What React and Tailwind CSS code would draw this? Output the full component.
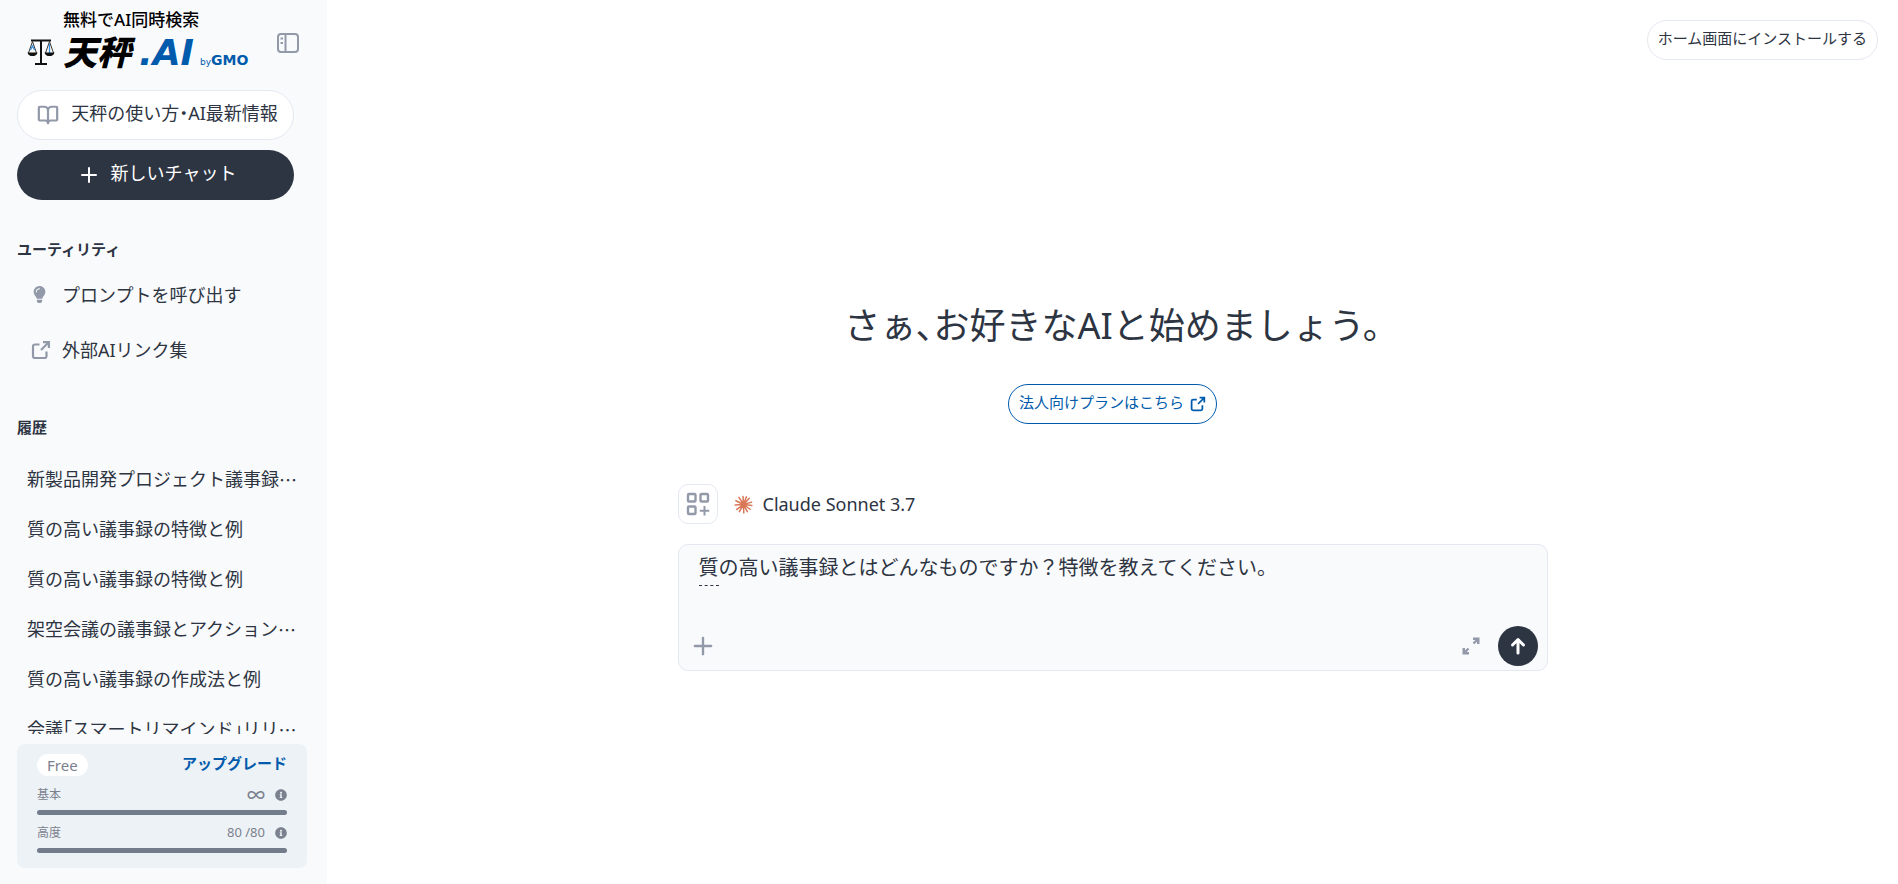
import { useState } from 'react';
import { BookOpen, Plus } from 'lucide-react';
import { FaLightbulb, FaInfoCircle } from 'react-icons/fa';

const history = [
  { title: '新製品開発プロジェクト議事録', cut: true },
  { title: '質の高い議事録の特徴と例' },
  { title: '質の高い議事録の特徴と例' },
  { title: '架空会議の議事録とアクション', cut: true },
  { title: '質の高い議事録の作成法と例' },
  { title: '会議「スマートリマインド」リリ', cut: true },
];

function ScalesIcon({ className }) {
  return (
    <svg viewBox="0 0 28 28" className={className} fill="none" aria-hidden="true">
      <path d="M4 2.500h20M14 2v23" stroke="#111" strokeWidth="2" />
      <path d="M8 26h12" stroke="#111" strokeWidth="2" />
      <path d="M5.500 3.500 1.500 15M5.500 3.500 9.500 15M22.500 3.500 18.500 15M22.500 3.500 26.500 15" stroke="#333" strokeWidth="1" />
      <path d="M3.500 12 5.500 8l2 4M22.500 6v9" stroke="#3b8fdc" strokeWidth="1.300" />
      <path d="M.5 14.500h10c-.6 2.600-2.600 3.600-5 3.600s-4.400-1-5-3.600ZM17.500 14.500h10c-.6 2.600-2.600 3.600-5 3.600s-4.400-1-5-3.600Z" fill="#111" />
    </svg>
  );
}

function SidebarIcon({ className }) {
  return (
    <svg viewBox="0 0 22 20" className={className} fill="none" stroke="currentColor" strokeWidth="2" aria-hidden="true">
      <rect x="1" y="1" width="20" height="18" rx="3" />
      <path d="M8.500 1v18" />
      <path d="M3.500 5.500h2.500M3.500 10h2.500" />
    </svg>
  );
}

function ExternalIcon({ className }) {
  return (
    <svg viewBox="0 0 20 20" className={className} fill="none" stroke="currentColor" strokeWidth="2.200" aria-hidden="true">
      <path d="M8.500 4.500H4A2 2 0 0 0 2 6.500V16a2 2 0 0 0 2 2h9.500a2 2 0 0 0 2-2v-4.500" />
      <path d="M18 2l-8 8" />
      <path d="M12 1h7v7h-2.200V3.200H12Z" fill="currentColor" stroke="none" />
      <path d="M14.500 2.500h3v3Z" fill="currentColor" stroke="none" />
    </svg>
  );
}

function ModelsIcon({ className }) {
  return (
    <svg viewBox="0 0 24 24" className={className} fill="none" stroke="currentColor" strokeWidth="2.400" aria-hidden="true">
      <rect x="2" y="2" width="7.500" height="7.500" rx="1" />
      <rect x="14.500" y="2" width="7.500" height="7.500" rx="1" />
      <rect x="2" y="14.500" width="7.500" height="7.500" rx="1" />
      <path d="M18.500 14v9.500M13.800 18.700h9.500" strokeWidth="2" />
    </svg>
  );
}

function BurstIcon({ className }) {
  return (
    <svg viewBox="0 0 20 20" className={className} stroke="#d97757" strokeWidth="1.600" strokeLinecap="round" aria-hidden="true">
      <path d="M10 10 9.500 1.500M10 10l3-8M10 10l6-6.500M10 10l8.500-2.500M10 10l8.800 1M10 10l7 5M10 10l4 7.500M10 10l.3 8.800M10 10l-4.300 7.500M10 10l-7 5.200M10 10l-8.800.5M10 10 2 6M10 10 5.200 2.500" />
    </svg>
  );
}

function ExpandIcon({ className }) {
  return (
    <svg viewBox="0 0 18 18" className={className} fill="currentColor" stroke="currentColor" aria-hidden="true">
      <path d="M11 .5h6.500V7H15V3h-4Z" stroke="none" />
      <path d="M7 17.500H.5V11H3v4h4Z" stroke="none" />
      <path d="M16 2l-4.500 4.500M2 16l4.500-4.500" strokeWidth="2.400" />
    </svg>
  );
}

function SendIcon({ className }) {
  return (
    <svg viewBox="0 0 16 18" className={className} fill="none" stroke="currentColor" strokeWidth="3" strokeLinecap="round" strokeLinejoin="round" aria-hidden="true">
      <path d="M8 16V2.500M2.500 8 8 2.500 13.500 8" />
    </svg>
  );
}

function Meter({ label, value }) {
  return (
    <div>
      <div className="flex h-6 items-center justify-between text-xs">
        <span>{label}</span>
        <span className="flex items-center gap-2.5 text-[13px]">
          {value}
          <FaInfoCircle className="size-3" />
        </span>
      </div>
      <div className="mt-[3px] h-[5px] rounded-full bg-[#737c8b]" />
    </div>
  );
}

export default function App() {
  const [prompt, setPrompt] = useState('質の高い議事録とはどんなものですか？特徴を教えてください。');

  return (
    <div className="flex h-screen bg-white font-['Noto_Sans','Noto_Sans_CJK_JP',sans-serif] text-[#2d3442] [font-feature-settings:'halt']" lang="ja">
      <aside className="flex w-[327px] shrink-0 flex-col bg-[#f9fafc] pb-4 pl-[17px] pr-5">
        <div className="flex items-center justify-between pr-2 pt-3">
          <a href="#" className="flex items-end gap-2 pl-2.5 text-black">
            <ScalesIcon className="mb-2 size-7" />
            <span className="flex flex-col">
              <span className="h-[18px] text-[17px] leading-4 font-medium">無料でAI同時検索</span>
              <span className="flex h-11 items-baseline font-black">
                <span className="text-[34px] leading-11 italic">天秤</span>
                <span className="flex items-baseline pl-2 font-['DejaVu_Sans',sans-serif] font-bold text-[#005bac]">
                  <span className="text-4xl leading-11 italic">.AI</span>
                  <span className="pl-1.5 text-[9px] leading-4 font-normal">by</span>
                  <span className="text-sm leading-4">GMO</span>
                </span>
              </span>
            </span>
          </a>
          <button type="button" aria-label="サイドバーを閉じる" className="text-[#9299a8]">
            <SidebarIcon className="h-5 w-[22px]" />
          </button>
        </div>

        <div className="mr-[13px] mt-4 flex flex-col gap-2.5 text-lg">
          <a href="#" className="flex h-[50px] items-center justify-center gap-3 rounded-full border border-[#e4e8f0] bg-white pl-1">
            <BookOpen className="size-[22px] text-[#9299a8]" strokeWidth={2.4} />
            <span className="pb-1">天秤の使い方・AI最新情報</span>
          </a>
          <button type="button" className="flex h-[50px] items-center justify-center gap-2.5 rounded-full bg-[#2d3442] pl-0.5 text-white">
            <Plus className="size-6" />
            <span className="pb-1">新しいチャット</span>
          </button>
        </div>

        <h2 className="mt-[39px] text-[15px] leading-5 font-bold">ユーティリティ</h2>
        <nav className="mt-2 flex flex-col text-lg">
          <button type="button" className="flex h-[55px] items-center gap-3.5 pl-3.5">
            <FaLightbulb className="size-[17px] text-[#9299a8]" />
            <span>プロンプトを呼び出す</span>
          </button>
          <a href="#" className="flex h-[55px] items-center gap-[11px] pl-3.5">
            <ExternalIcon className="size-5 text-[#9299a8]" />
            <span>外部AIリンク集</span>
          </a>
        </nav>

        <h2 className="mt-10 text-[15px] leading-5 font-bold">履歴</h2>
        <ul className="mt-[17px] min-h-0 flex-1 overflow-hidden text-lg">
          {history.map(({ title, cut }, i) => (
            <li key={i}>
              <a href="#" className="flex h-[50px] items-center pl-2.5 whitespace-nowrap">
                {title}
                {cut && <span className="font-['Noto_Sans_CJK_JP',sans-serif] leading-7">…</span>}
              </a>
            </li>
          ))}
        </ul>

        <section className="mt-2.5 rounded-lg bg-[#edf2f6] px-5 pb-[15px] pt-2.5 text-[#7b818e]">
          <div className="flex items-start justify-between">
            <span className="rounded-full bg-white px-2.5 text-[15px] leading-[22px]">Free</span>
            <a href="#" className="text-[15px] leading-[18px] font-bold text-[#005bac]">アップグレード</a>
          </div>
          <div className="mt-[7px] flex flex-col gap-1.5">
            <Meter label="基本" value={<span className="text-lg leading-6 font-medium">∞</span>} />
            <Meter label="高度" value="80 /80" />
          </div>
        </section>
      </aside>

      <main className="flex min-w-0 flex-1 flex-col">
        <header className="flex justify-end p-5">
          <button type="button" className="h-10 rounded-full border border-[#e4e8f0] px-2.5 pb-1 text-[15px]">ホーム画面にインストールする</button>
        </header>

        <div className="flex flex-1 flex-col items-center justify-center px-6">
          <h1 className="text-4xl leading-[66px]">さぁ、お好きなAIと始めましょう。</h1>
          <a href="#" className="mt-[25px] flex h-10 items-center gap-1.5 rounded-full border border-[#005bac] px-2.5 text-[15px] text-[#005bac]">
            <span className="pb-1">法人向けプランはこちら</span>
            <ExternalIcon className="size-4" />
          </a>

          <div className="mt-[60px] w-full max-w-[870px]">
            <div className="flex items-center">
              <button type="button" aria-label="モデルを選択" className="flex size-10 items-center justify-center rounded-[10px] border border-[#e4e8f0] text-[#9299a8]">
                <ModelsIcon className="size-6" />
              </button>
              <BurstIcon className="ml-4 size-[19px]" />
              <span className="ml-2.5 text-lg">Claude Sonnet 3.7</span>
            </div>

            <form className="relative mt-5 rounded-[10px] border border-[#e4e8f0] bg-[#f9fafc]" onSubmit={(e) => e.preventDefault()}>
              <textarea
                aria-label="メッセージ"
                value={prompt}
                onChange={(e) => setPrompt(e.target.value)}
                className="block h-[81px] w-full resize-none bg-transparent px-5 pt-2 text-xl leading-[30px] outline-none"
              />
              <span className="absolute left-5 top-10 w-5 border-t border-dashed border-[#2d3442]" />
              <div className="flex items-center pr-[9px] pb-1 pl-2.5">
                <button type="button" aria-label="ファイルを追加" className="text-[#9299a8]">
                  <Plus className="size-7" />
                </button>
                <button type="button" aria-label="拡大" className="ml-auto text-[#9299a8]">
                  <ExpandIcon className="size-[18px]" />
                </button>
                <button type="submit" aria-label="送信" className="ml-[18px] flex size-10 items-center justify-center rounded-full bg-[#2d3442] text-white">
                  <SendIcon className="h-[18px] w-4" />
                </button>
              </div>
            </form>
          </div>
        </div>
      </main>
    </div>
  );
}
